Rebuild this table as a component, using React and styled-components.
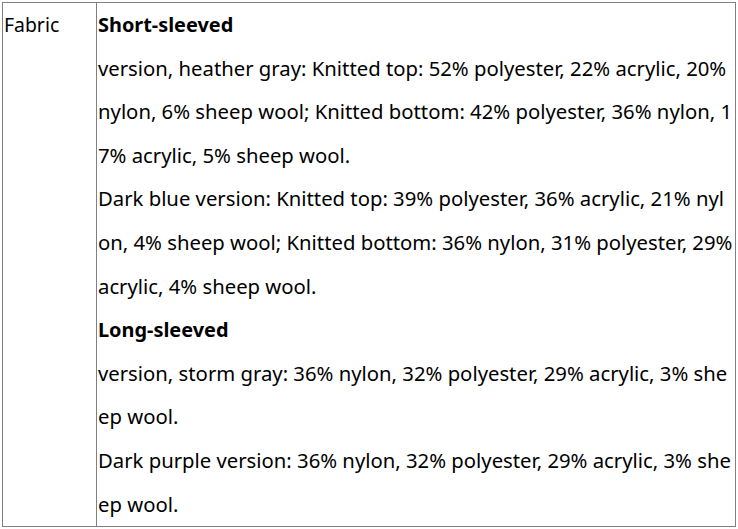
import styled, { createGlobalStyle } from "styled-components";

const GlobalStyle = createGlobalStyle`
  html, body {
    margin: 0;
    background: #ffffff;
  }
  body {
    font-family: "Noto Sans", "Open Sans", sans-serif;
    color: #000000;
  }
`;

const Page = styled.div`
  padding: 2px;
`;

const Table = styled.table`
  width: 734px;
  border-collapse: collapse;
  font-size: 20.3px;
  line-height: 43.6px;
`;

const Cell = styled.td`
  border: 1px solid #808080;
  padding: 0 1px;
  vertical-align: top;
  width: ${(p) => (p.$label ? "91px" : "auto")};
  word-break: break-all;
  font-size: ${(p) => (p.$label ? "19.4px" : "inherit")};
`;

const Heading = styled.p`
  margin: 0;
  font-weight: 700;
  font-size: 19.9px;
`;

const Para = styled.p`
  margin: 0;
`;

const fabric = [
  {
    title: "Short-sleeved",
    lines: [
      "version, heather gray: Knitted top: 52% polyester, 22% acrylic, 20% nylon, 6% sheep wool; Knitted bottom: 42% polyester, 36% nylon, 17% acrylic, 5% sheep wool.",
      "Dark blue version: Knitted top: 39% polyester, 36% acrylic, 21% nylon, 4% sheep wool; Knitted bottom: 36% nylon, 31% polyester, 29% acrylic, 4% sheep wool.",
    ],
  },
  {
    title: "Long-sleeved",
    lines: [
      "version, storm gray: 36% nylon, 32% polyester, 29% acrylic, 3% sheep wool.",
      "Dark purple version: 36% nylon, 32% polyester, 29% acrylic, 3% sheep wool.",
    ],
  },
];

export default function App() {
  return (
    <>
      <GlobalStyle />
      <Page>
        <Table>
          <tbody>
            <tr>
              <Cell $label>Fabric</Cell>
              <Cell>
                {fabric.map((group) => (
                  <div key={group.title}>
                    <Heading>{group.title}</Heading>
                    {group.lines.map((line) => (
                      <Para key={line}>{line}</Para>
                    ))}
                  </div>
                ))}
              </Cell>
            </tr>
          </tbody>
        </Table>
      </Page>
    </>
  );
}
